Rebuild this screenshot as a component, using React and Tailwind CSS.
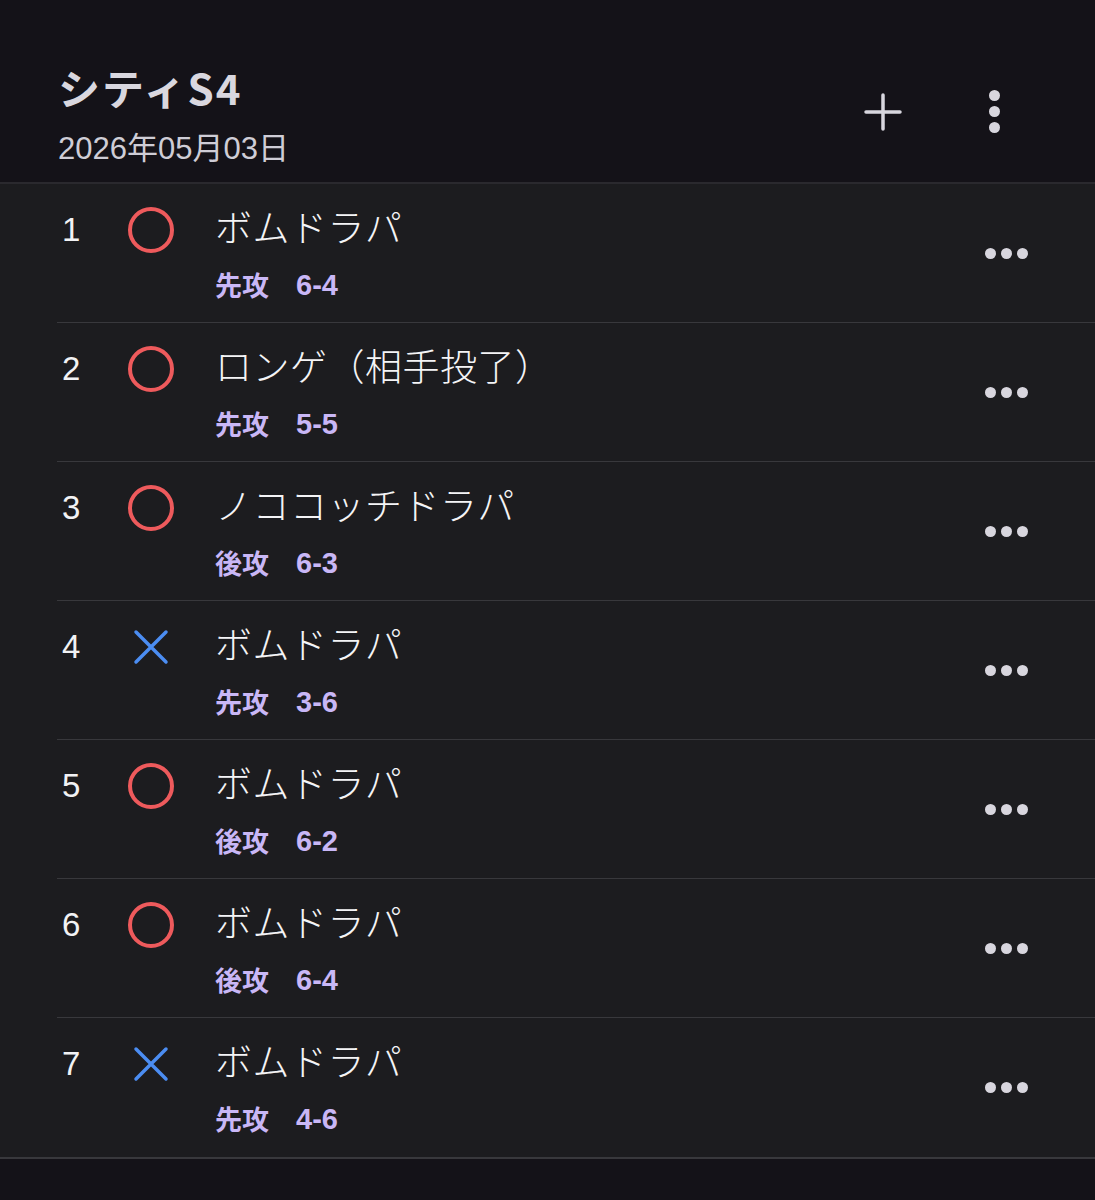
import React from 'react';

const games = [
  { no: 1, win: true, deck: 'ボムドラパ', turn: '先攻', score: '6-4' },
  { no: 2, win: true, deck: 'ロンゲ（相手投了）', turn: '先攻', score: '5-5' },
  { no: 3, win: true, deck: 'ノココッチドラパ', turn: '後攻', score: '6-3' },
  { no: 4, win: false, deck: 'ボムドラパ', turn: '先攻', score: '3-6' },
  { no: 5, win: true, deck: 'ボムドラパ', turn: '後攻', score: '6-2' },
  { no: 6, win: true, deck: 'ボムドラパ', turn: '後攻', score: '6-4' },
  { no: 7, win: false, deck: 'ボムドラパ', turn: '先攻', score: '4-6' },
];

const font = { fontFamily: '"Liberation Sans", "Noto Sans CJK JP", sans-serif' };
const jp = { fontFamily: '"Noto Sans CJK JP", sans-serif' };

const ResultMark = ({ win }) =>
  win ? (
    <svg width="48" height="48" viewBox="0 0 48 48">
      <circle cx="24" cy="24" r="21" fill="none" stroke="#ee5a5c" strokeWidth="4" />
    </svg>
  ) : (
    <svg width="48" height="48" viewBox="0 0 48 48">
      <path d="M9 9 L39 39 M39 9 L9 39" stroke="#4b8df2" strokeWidth="3.5" strokeLinecap="round" />
    </svg>
  );

const GameRow = ({ game, last }) => (
  <div className="flex h-[139px] items-start pl-[57px]">
    <div className={`flex flex-1 h-full ${last ? '' : 'border-b border-[#38383c]'}`}>
      <div className="w-[48px] pt-[26px] pl-[5px] text-[33px] leading-[40px] text-[#f2f2f4]">{game.no}</div>
      <div className="w-[110px] pt-[22px] pl-[22px]">
        <ResultMark win={game.win} />
      </div>
      <div className="flex-1 pt-[19px]">
        <div className="text-[37px] leading-[46px] font-light tracking-[0.5px] text-[#f4f4f6]" style={jp}>
          {game.deck}
        </div>
        <div className="mt-[19px] flex items-center gap-[27px] text-[27px] leading-[34px] font-bold text-[#c9b7f6]">
          <span style={jp}>{game.turn}</span>
          <span className="text-[29px]">{game.score}</span>
        </div>
      </div>
      <div className="flex items-center gap-[5px] pr-[67px] pb-[30px] pt-[30px]">
        <span className="h-[11px] w-[11px] rounded-full bg-[#d8d6de]" />
        <span className="h-[11px] w-[11px] rounded-full bg-[#d8d6de]" />
        <span className="h-[11px] w-[11px] rounded-full bg-[#d8d6de]" />
      </div>
    </div>
  </div>
);

export default function App() {
  return (
    <div className="min-h-[1200px] w-[1095px] bg-[#141218]" style={font}>
      <header className="flex h-[184px] items-start justify-between border-b-2 border-[#2a292e] pl-[58px] pr-[95px]">
        <div className="pt-[62px]">
          <h1 className="text-[42px] leading-[50px] font-bold tracking-[2px] text-[#d9d7df]" style={{ fontFamily: '"Noto Sans CJK JP", "Liberation Sans", sans-serif' }}>
            シティS4
          </h1>
          <p className="mt-[18px] text-[31px] leading-[38px] text-[#cfcdd6]">2026年05月03日</p>
        </div>
        <div className="flex items-center gap-[86px] pt-[90px]">
          <svg width="40" height="40" viewBox="0 0 40 40">
            <path d="M20 3 V37 M3 20 H37" stroke="#d8d6de" strokeWidth="3.5" strokeLinecap="round" />
          </svg>
          <div className="flex flex-col items-center gap-[5px]">
            <span className="h-[11px] w-[11px] rounded-full bg-[#d8d6de]" />
            <span className="h-[11px] w-[11px] rounded-full bg-[#d8d6de]" />
            <span className="h-[11px] w-[11px] rounded-full bg-[#d8d6de]" />
          </div>
        </div>
      </header>
      <div className="bg-[#1c1c1f] border-b-2 border-[#38383c]">
        {games.map((g, i) => (
          <GameRow key={g.no} game={g} last={i === games.length - 1} />
        ))}
      </div>
    </div>
  );
}
